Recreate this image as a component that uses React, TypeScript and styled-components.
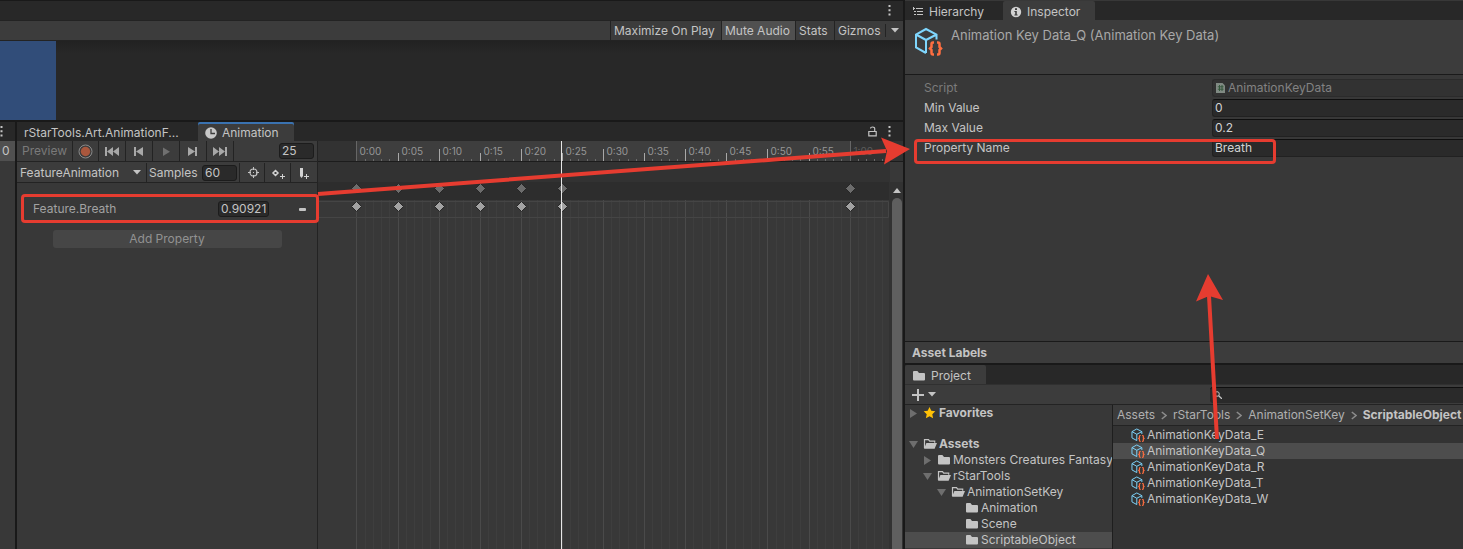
import React from "react";
import styled, { createGlobalStyle, css } from "styled-components";

const Global = createGlobalStyle`
  * { box-sizing: border-box; }
  html, body { margin: 0; background: #191919; }
  body, button, input, select { font-family: Inter, "Liberation Sans", sans-serif; font-size: 12px; line-height: 16px; color: #c4c4c4; }
  button, input, select { margin: 0; padding: 0; border: 0; background: none; outline: none; border-radius: 0; }
  svg { display: block; flex: none; }
`;

/* ---------- shell ---------- */

const Editor = styled.main`
  position: relative;
  display: grid;
  grid-template-columns: minmax(0, 903fr) minmax(0, 558fr);
  gap: 2px;
  min-height: 100vh;
  overflow: hidden;
  white-space: nowrap;
`;

const Column = styled.div`
  display: flex;
  flex-direction: column;
  gap: 2px;
  min-width: 0;
`;

const TabBar = styled.div`
  display: flex;
  align-items: stretch;
  height: 19px;
  background: #282828;
`;

const Tab = styled.button<{ $active?: boolean; $accent?: boolean; $width?: number }>`
  display: flex;
  align-items: center;
  gap: 5px;
  padding: 2px 7px 0;
  ${(p) => p.$width && css`width: ${p.$width}px;`}
  border-radius: 2px 2px 0 0;
  background: ${(p) => (p.$active ? "#3c3c3c" : "transparent")};
  box-shadow: ${(p) => (p.$accent ? "inset 0 2px #3a72b0" : "none")};
`;

const TabActions = styled.div`
  display: flex;
  align-items: center;
  gap: 11px;
  margin-left: auto;
  padding-right: 12px;
`;

const IconButton = styled.button`
  display: flex;
  align-items: center;
  justify-content: center;
`;

/* ---------- game view ---------- */

const GamePanel = styled.section`
  display: flex;
  flex-direction: column;
  height: 120px;
  padding-top: 1px;
`;

const GameToolbar = styled.div`
  display: flex;
  justify-content: flex-end;
  gap: 1px;
  height: 21px;
  border-top: 1px solid #232323;
  border-bottom: 1px solid #232323;
  background: #3c3c3c;
`;

const ToolbarButton = styled.button<{ $on?: boolean; $width: number }>`
  width: ${(p) => p.$width}px;
  padding-left: 3px;
  background: ${(p) => (p.$on ? "#505050" : "#3c3c3c")};
  box-shadow: -1px 0 #232323;
  text-align: left;
`;

const DropButton = styled(IconButton)`
  width: 18px;
  margin: 3px 0;
  border-left: 1px solid #232323;
`;

const GameSurface = styled.div`
  flex: 1;
  background: linear-gradient(#222 0, #282828 12px);
`;

const Sky = styled.div`
  width: 56px;
  height: 100%;
  background: #314d79;
`;

/* ---------- animation window ---------- */

const LowerArea = styled.div`
  display: grid;
  grid-template-columns: 15px minmax(0, 1fr);
  gap: 2px;
  flex: 1;
`;

const Sliver = styled.aside`
  display: flex;
  flex-direction: column;
  background: #383838;
  overflow: hidden;
`;

const SliverHead = styled.div`
  display: flex;
  align-items: center;
  height: 19px;
  background: #282828;
`;

const SliverValue = styled.div`
  height: 20px;
  padding: 2px;
  background: #505050;
`;

const AnimationPanel = styled.section`
  display: flex;
  flex-direction: column;
`;

const AnimationBody = styled.div`
  display: grid;
  grid-template-columns: 301px minmax(0, 1fr) 14px;
  flex: 1;
`;

const Properties = styled.div`
  border-right: 1px solid #232323;
  background: #383838;
`;

const ControlRow = styled.div<{ $inset?: boolean }>`
  display: flex;
  align-items: stretch;
  height: 21px;
  padding-top: ${(p) => (p.$inset ? 1 : 0)}px;
  border-bottom: 1px solid #232323;
  background: #3c3c3c;
`;

const Control = styled.button<{ $width: number; $dim?: boolean }>`
  display: flex;
  align-items: center;
  justify-content: center;
  width: ${(p) => p.$width}px;
  border-right: 1px solid #232323;
  color: ${(p) => (p.$dim ? "#7a7a7a" : "#c4c4c4")};

  &:last-child {
    border-right: 0;
  }
`;

const NumberBox = styled.input<{ $width: number }>`
  width: ${(p) => p.$width}px;
  height: 16px;
  padding: 0 2px;
  border: 1px solid #1c1c1c;
  border-radius: 3px;
  background: #2a2a2a;
`;

const FrameBox = styled(NumberBox)`
  margin: 2px 3px 0 auto;
`;

const ClipSelect = styled.div`
  position: relative;
  display: flex;
  width: 130px;
  border-right: 1px solid #232323;
`;

const Select = styled.select`
  appearance: none;
  width: 100%;
  padding-left: 3px;
`;

const SelectArrow = styled.span`
  position: absolute;
  right: 5px;
  top: 7px;
  pointer-events: none;
`;

const Samples = styled.label`
  display: flex;
  align-items: center;
  justify-content: space-between;
  width: 93px;
  padding: 0 2px;
  border-right: 1px solid #232323;
`;

const PropertyRow = styled.label`
  display: flex;
  align-items: center;
  height: 18px;
  margin-top: 17px;
  padding: 0 10px 0 16px;
  color: #a2a2a2;
`;

const ValueBox = styled(NumberBox)`
  margin-left: auto;
  margin-right: 29px;
`;

const AddProperty = styled.button`
  display: block;
  width: 229px;
  height: 18px;
  margin: 12px auto 0;
  border-radius: 3px;
  background: #464646;
  color: #929292;
`;

const Timeline = styled.div`
  display: flex;
  flex-direction: column;
  min-width: 0;
  background: #383838;
`;

const TimelineArt = styled.svg`
  width: 100%;
  flex: 1;
`;

const ScrollGutter = styled.div`
  display: flex;
  flex-direction: column;
  align-items: center;
  padding-left: 1px;
  background: #323232;
`;

const GutterHead = styled.div`
  width: 100%;
  height: 41px;
  background: linear-gradient(#323232 20px, #1c1c1c 20px, #1c1c1c 21px, #383838 21px);
`;

const ScrollUp = styled(IconButton)`
  height: 16px;
`;

const Thumb = styled.div`
  flex: 1;
  width: 10px;
  border-radius: 5px 5px 0 0;
  background: #5f5f5f;
`;

/* ---------- inspector ---------- */

const Inspector = styled.section`
  display: flex;
  flex-direction: column;
  flex: 1;
  padding-top: 1px;
  background: #383838;
`;

const ObjectHeader = styled.header`
  display: flex;
  gap: 8px;
  height: 55px;
  padding: 7px 9px;
  border-bottom: 1px solid #1a1a1a;
  background: #3c3c3c;
  color: #a8a8a8;
`;

const ObjectTitle = styled.h1`
  margin: 0;
  font-size: 13px;
  font-weight: 400;
  line-height: 16px;
`;

const Fields = styled.div`
  flex: 1;
  padding: 3px 0 0 19px;
`;

const Field = styled.label<{ $dim?: boolean }>`
  display: grid;
  grid-template-columns: 288px minmax(0, 1fr);
  align-items: center;
  height: 20px;
  color: ${(p) => (p.$dim ? "#7b7b7b" : "#c4c4c4")};
`;

const FieldBox = styled.span<{ $dim?: boolean }>`
  display: flex;
  align-items: center;
  gap: 2px;
  height: 18px;
  padding-left: 2px;
  border: 1px solid ${(p) => (p.$dim ? "#2b2b2b" : "#212121")};
  border-top-color: ${(p) => (p.$dim ? "#2b2b2b" : "#0f0f0f")};
  border-right: 0;
  border-radius: 3px 0 0 3px;
  background: ${(p) => (p.$dim ? "#323232" : "#2a2a2a")};
`;

const FieldInput = styled.input<{ $dim?: boolean }>`
  flex: 1;
  min-width: 0;
  color: ${(p) => (p.$dim ? "#828282" : "#d2d2d2")};
`;

const LabelsBar = styled.h2`
  margin: 0;
  height: 22px;
  padding: 2px 7px;
  border-top: 1px solid #1a1a1a;
  background: #3c3c3c;
  font-size: 12px;
  font-weight: 700;
  line-height: 18px;
`;

/* ---------- project ---------- */

const Project = styled.section`
  display: flex;
  flex-direction: column;
`;

const ProjectToolbar = styled.div`
  display: flex;
  align-items: center;
  justify-content: space-between;
  height: 21px;
  padding-left: 7px;
  border-top: 1px solid #303030;
  border-bottom: 1px solid #232323;
  background: #3c3c3c;
`;

const AddButton = styled(IconButton)`
  gap: 4px;
`;

const Search = styled.label`
  display: flex;
  align-items: center;
  width: 253px;
  height: 16px;
  padding-left: 4px;
  border-top: 1px solid #0f0f0f;
  border-radius: 3px 0 0 3px;
  background: #2a2a2a;
`;

const SearchInput = styled.input`
  flex: 1;
  min-width: 0;
`;

const ProjectBody = styled.div`
  display: grid;
  grid-template-columns: 208px minmax(0, 1fr);
`;

const Tree = styled.div`
  display: flex;
  flex-direction: column;
  padding-bottom: 1px;
  border-right: 1px solid #1e1e1e;
  background: #383838;
  overflow: hidden;
`;

const TreeGap = styled.div`
  height: 15px;
`;

const TreeRow = styled.button<{ $depth: number; $bold?: boolean; $selected?: boolean }>`
  display: flex;
  align-items: center;
  height: 16px;
  padding-left: ${(p) => 4 + p.$depth * 14}px;
  background: ${(p) => (p.$selected ? "#4d4d4d" : "transparent")};
  font-weight: ${(p) => (p.$bold ? 700 : 400)};
`;

const TreeSlot = styled.span`
  flex: none;
  width: 14px;
`;

const TreeText = styled.span`
  margin-left: 2px;
`;

const Assets = styled.div`
  background: #333;
`;

const Crumbs = styled.nav`
  display: flex;
  align-items: center;
  gap: 6px;
  height: 21px;
  margin-bottom: 1px;
  padding-left: 4px;
  border-bottom: 1px solid #232323;
  background: #3c3c3c;
`;

const Crumb = styled.a<{ $current?: boolean }>`
  color: ${(p) => (p.$current ? "#c4c4c4" : "#b0b0b0")};
  font-weight: ${(p) => (p.$current ? 700 : 400)};
  text-decoration: none;
`;

const AssetRow = styled.button<{ $selected?: boolean }>`
  display: flex;
  align-items: center;
  gap: 2px;
  width: 100%;
  height: 16px;
  padding-left: 18px;
  background: ${(p) => (p.$selected ? "#4d4d4d" : "transparent")};
`;

/* ---------- annotations ---------- */

const Callout = styled.div<{ $x: number; $y: number; $w: number; $h: number }>`
  position: absolute;
  left: ${(p) => p.$x}px;
  top: ${(p) => p.$y}px;
  width: ${(p) => p.$w}px;
  height: ${(p) => p.$h}px;
  border: 3px solid #e63c30;
  border-radius: 4px;
  pointer-events: none;
`;

const Arrows = styled.svg`
  position: absolute;
  inset: 0;
  width: 100%;
  height: 100%;
  pointer-events: none;
`;

/* ---------- icons ---------- */

const Kebab = () => (
  <svg width="3" height="11" fill="#c4c4c4">
    <path d="M0.5 0h2v2h-2zM0.5 4.3h2v2h-2zM0.5 8.6h2v2h-2z" />
  </svg>
);

const Down = () => (
  <svg width="8" height="5" fill="#c4c4c4"><path d="M0 0h8L4 4.6z" /></svg>
);

const HierarchyIcon = () => (
  <svg width="12" height="12" stroke="#c4c4c4" fill="none">
    <path d="M1 2.5h2M4 2.5h7M2 5.500h2M5 5.500h6M2 8.500h2M5 8.500h6M1.500 1v3" />
  </svg>
);

const InfoIcon = () => (
  <svg width="12" height="12">
    <circle cx="6" cy="6" r="5.2" fill="#d2d2d2" />
    <path d="M5 2.3h2v1.6H5zM4.4 5h2.4v3.4h.8v1H4.4v-1h.8V6h-.8z" fill="#3c3c3c" />
  </svg>
);

const ClockIcon = () => (
  <svg width="12" height="12">
    <circle cx="6" cy="6" r="5.8" fill="#c8c8c8" />
    <path d="M6 2v4.5h4" stroke="#3c3c3c" strokeWidth="1.3" fill="none" />
  </svg>
);

const LockIcon = () => (
  <svg width="9" height="11" fill="none" stroke="#c4c4c4">
    <path d="M0.8 5.5h7.4v4.3H0.8zM6.7 5.5V2.6Q6.7 1 4.6 1T2.6 2.5" strokeWidth="1.2" />
  </svg>
);

const FolderIcon = ({ open }: { open?: boolean }) =>
  open ? (
    <svg width="14" height="12">
      <path d="M1.500 10V1.600h4l1.200 1.600h5v1.600" fill="none" stroke="#c4c4c4" strokeWidth="1.200" />
      <path d="M3.400 5h10.600L11.600 10.800H1z" fill="#c4c4c4" />
    </svg>
  ) : (
    <svg width="14" height="12"><path d="M1 2q0-1 1-1h3.4L7 3h5q1 0 1 1v5.6q0 1-1 1H2q-1 0-1-1z" fill="#c4c4c4" /></svg>
  );

const StarIcon = () => (
  <svg width="14" height="12" viewBox="1 1 14 12"><path d="M7.500 1l1.800 3.800 4 .5-3 2.900.8 4.100-3.600-2-3.600 2 .8-4.100-3-2.900 4-.5z" fill="#ffc107" /></svg>
);

const CubeIcon = ({ size }: { size: number }) => (
  <svg width={size} height={size} viewBox="0 0 29 29" fill="none">
    <path d="M12 26L2 20.500V7.500L12 2 22.500 7.500V12.500M2 7.500L12 13 22.500 7.500M12 13V26" stroke="#7fd6fd" strokeWidth="2" />
    <path d="M20 15.500h-1q-1.500 0-1.500 1.500v3l-1.500 1.500 1.500 1.500v3q0 1.500 1.500 1.500h1M23 15.500h1q1.500 0 1.500 1.500v3l1.500 1.500-1.500 1.500v3q0 1.500-1.500 1.500h-1" stroke="#ff6e40" strokeWidth="2.500" />
  </svg>
);

const ScriptIcon = () => (
  <svg width="11" height="12">
    <path d="M1 1h6.5L10 3.4V11H1z" fill="#808a83" />
    <path d="M4.5 3v6M7 3v6M2.8 4.8h5.7M2.8 7.2h5.7" stroke="#35573c" />
  </svg>
);

const Fold = ({ open }: { open?: boolean }) => (
  <svg width="9" height="9" fill="#6e6e6e"><path d={open ? "M0 1h9L4.5 8z" : "M1 0l7 4.5L1 9z"} /></svg>
);

const Chevron = () => (
  <svg width="6" height="9" fill="none" stroke="#8c8c8c" strokeWidth="1.5"><path d="M0.8 1L5 4.5 0.8 8" /></svg>
);

const PlayIcon = ({ kind }: { kind: string }) => {
  const shapes: Record<string, string> = {
    first: "M0 0h2v9H0zM8 0v9L2 4.5zM14 0v9L8 4.5z",
    prev: "M2 0h2v9H2zM11 0v9L4 4.5z",
    play: "M4 0.5l7 4.2-7 4.2z",
    next: "M2 0v9l7-4.5zM9 0h2v9H9z",
    last: "M0 0v9l6-4.5zM6 0v9l6-4.5zM12 0h2v9h-2z",
  };
  return <svg width="14" height="9" fill={kind === "play" ? "#707070" : "#a8a8a8"}><path d={shapes[kind]} /></svg>;
};

/* ---------- timeline drawing ---------- */

const ORIGIN = 38.9;
const FRAME = 8.22;
const frameX = (f: number) => Math.floor(ORIGIN + f * FRAME) + 0.5;
const KEYS = [0, 5, 10, 15, 20, 25, 60];
const FRAMES = Array.from({ length: 65 }, (_, i) => i);

const Diamond = ({ x, y, fill }: { x: number; y: number; fill: string }) => (
  <path d={`M${x} ${y - 5}l5 5-5 5-5-5z`} fill={fill} stroke="#262626" />
);

const TimelineDrawing = () => (
  <TimelineArt fontSize="10" fill="#969696">
    <rect width="100%" height="100%" fill="#383838" />
    {FRAMES.map((f) => (
      <path key={f} d={`M${frameX(f)} 59V2000`} stroke={f % 5 ? "#3e3e3e" : "#4a4a4a"} />
    ))}
    <rect width="100%" height="20" fill="#323232" />
    <rect x="38" width="494" height="20" fill="#3e3e3e" />
    <rect y="20" width="100%" height="1" fill="#1c1c1c" />
    <rect y="21" width="100%" height="20" fill="#323232" />
    <rect y="41" width="100%" height="18" fill="#2d2d2d" />
    <path d="M0 60.5H570.5V76.5H0" fill="none" stroke="#454545" />
    {FRAMES.map((f) => (
      <path
        key={f}
        d={`M${frameX(f)} ${f % 60 === 0 ? 0 : f % 10 === 0 ? 8 : f % 5 === 0 ? 12 : 18}V20`}
        stroke={f % 60 === 0 ? "#666" : f % 5 ? "#6a6a6a" : "#a8a8a8"}
      />
    ))}
    {FRAMES.filter((f) => f % 5 === 0 && f <= 60).map((f) => (
      <text key={f} x={frameX(f) + 3} y="14" fill={f === 60 ? "#5c5c5c" : "#969696"}>
        {f === 60 ? "1:00" : `0:${String(f).padStart(2, "0")}`}
      </text>
    ))}
    {KEYS.map((f) => (
      <g key={f}>
        <Diamond x={frameX(f)} y={47.5} fill="#6c6c6c" />
        <Diamond x={frameX(f)} y={65.5} fill="#a2a2a2" />
      </g>
    ))}
    <path d="M243.5 0V2000" stroke="#e6e6e6" />
  </TimelineArt>
);

/* ---------- data ---------- */

const TREE = [
  { name: "Assets", depth: 0, fold: "open", bold: true },
  { name: "Monsters Creatures Fantasy", depth: 1, fold: "shut" },
  { name: "rStarTools", depth: 1, fold: "open" },
  { name: "AnimationSetKey", depth: 2, fold: "open" },
  { name: "Animation", depth: 3 },
  { name: "Scene", depth: 3 },
  { name: "ScriptableObject", depth: 3, selected: true },
];

const CRUMBS = ["Assets", "rStarTools", "AnimationSetKey", "ScriptableObject"];
const ASSETS = ["E", "Q", "R", "T", "W"];
const FIELDS = [
  ["Min Value", "0"],
  ["Max Value", "0.2"],
  ["Property Name", "Breath"],
];

export default function App() {
  return (
    <>
      <Global />
      <Editor>
        <Column>
          <GamePanel>
            <TabBar>
              <TabActions><IconButton aria-label="Game view menu"><Kebab /></IconButton></TabActions>
            </TabBar>
            <GameToolbar>
              <ToolbarButton $width={110}>Maximize On Play</ToolbarButton>
              <ToolbarButton $width={73} $on>Mute Audio</ToolbarButton>
              <ToolbarButton $width={38}>Stats</ToolbarButton>
              <ToolbarButton $width={49}>Gizmos</ToolbarButton>
              <DropButton aria-label="Gizmo options"><Down /></DropButton>
            </GameToolbar>
            <GameSurface><Sky /></GameSurface>
          </GamePanel>

          <LowerArea>
            <Sliver>
              <SliverHead><Kebab /></SliverHead>
              <SliverValue>0</SliverValue>
            </Sliver>
            <AnimationPanel>
              <TabBar>
                <Tab $width={181}>rStarTools.Art.AnimationF...</Tab>
                <Tab $active $accent $width={96}><ClockIcon />Animation</Tab>
                <TabActions>
                  <IconButton aria-label="Lock"><LockIcon /></IconButton>
                  <IconButton aria-label="Animation menu"><Kebab /></IconButton>
                </TabActions>
              </TabBar>
              <AnimationBody>
                <Properties>
                  <ControlRow>
                    <Control $width={56} $dim>Preview</Control>
                    <Control $width={26} aria-label="Record">
                      <svg width="15" height="15"><circle cx="7.5" cy="7.5" r="6.5" fill="none" stroke="#8a8a8a" /><circle cx="7.5" cy="7.5" r="4.7" fill="#a9573d" /></svg>
                    </Control>
                    {["first", "prev", "play", "next", "last"].map((k) => (
                      <Control key={k} $width={27} aria-label={k}><PlayIcon kind={k} /></Control>
                    ))}
                    <FrameBox $width={35} aria-label="Frame" defaultValue="25" />
                  </ControlRow>
                  <ControlRow $inset>
                    <ClipSelect>
                      <Select aria-label="Clip"><option>FeatureAnimation</option></Select>
                      <SelectArrow><Down /></SelectArrow>
                    </ClipSelect>
                    <Samples>Samples<NumberBox $width={35} defaultValue="60" /></Samples>
                    <Control $width={25} aria-label="Filter by selection">
                      <svg width="13" height="13" fill="none" stroke="#c4c4c4"><circle cx="7.500" cy="6.500" r="3.500" strokeWidth="1.200" /><path d="M7.500 1v3M7.500 9v3M2 6.500h3M10 6.500h3M7 6.500h1" /></svg>
                    </Control>
                    <Control $width={26} aria-label="Add keyframe">
                      <svg width="14" height="12" fill="none" stroke="#d2d2d2"><path d="M4.500 3.500L7 6 4.500 8.500 2 6z" strokeWidth="1.500" /><path d="M9 9.500h5M11.500 7v5" /></svg>
                    </Control>
                    <Control $width={26} aria-label="Add event">
                      <svg width="12" height="12" fill="#d2d2d2"><path d="M2 1h3v8L3.500 11 2 9zM6 9h5v1H6zM8 7h1v5H8z" /></svg>
                    </Control>
                  </ControlRow>
                  <PropertyRow>
                    Feature.Breath
                    <ValueBox $width={51} defaultValue="0.90921" />
                    <svg width="9" height="5"><rect x="1" y="1" width="7" height="3" rx="1" fill="#c4c4c4" /></svg>
                  </PropertyRow>
                  <AddProperty>Add Property</AddProperty>
                </Properties>
                <Timeline><TimelineDrawing /></Timeline>
                <ScrollGutter>
                  <GutterHead />
                  <ScrollUp aria-label="Scroll up"><svg width="8" height="5" fill="#c4c4c4"><path d="M4 0l4 5H0z" /></svg></ScrollUp>
                  <Thumb />
                </ScrollGutter>
              </AnimationBody>
            </AnimationPanel>
          </LowerArea>
        </Column>

        <Column>
          <Inspector>
            <TabBar>
              <Tab $width={98}><HierarchyIcon />Hierarchy</Tab>
              <Tab $active $width={92}><InfoIcon />Inspector</Tab>
            </TabBar>
            <ObjectHeader>
              <CubeIcon size={29} />
              <ObjectTitle>Animation Key Data_Q (Animation Key Data)</ObjectTitle>
            </ObjectHeader>
            <Fields>
              <Field $dim>
                Script
                <FieldBox $dim><ScriptIcon /><FieldInput $dim readOnly value="AnimationKeyData" /></FieldBox>
              </Field>
              {FIELDS.map(([name, value]) => (
                <Field key={name}>
                  {name}
                  <FieldBox><FieldInput defaultValue={value} /></FieldBox>
                </Field>
              ))}
            </Fields>
            <LabelsBar>Asset Labels</LabelsBar>
          </Inspector>

          <Project>
            <TabBar>
              <Tab $active $width={81}><FolderIcon />Project</Tab>
            </TabBar>
            <ProjectToolbar>
              <AddButton aria-label="Create">
                <svg width="12" height="12" stroke="#c4c4c4" strokeWidth="2"><path d="M0 6h12M6 0v12" /></svg>
                <Down />
              </AddButton>
              <Search>
                <svg width="8" height="8" fill="none" stroke="#c4c4c4"><circle cx="3" cy="3" r="2.300" /><path d="M4.700 4.700L8 8" strokeWidth="1.300" /></svg>
                <SearchInput aria-label="Search" />
              </Search>
            </ProjectToolbar>
            <ProjectBody>
              <Tree>
                <TreeRow $depth={0} $bold>
                  <TreeSlot><Fold /></TreeSlot><StarIcon /><TreeText>Favorites</TreeText>
                </TreeRow>
                <TreeGap />
                {TREE.map((t) => (
                  <TreeRow key={t.name} $depth={t.depth} $bold={t.bold} $selected={t.selected}>
                    <TreeSlot>{t.fold && <Fold open={t.fold === "open"} />}</TreeSlot>
                    <FolderIcon open={t.fold === "open"} />
                    <TreeText>{t.name}</TreeText>
                  </TreeRow>
                ))}
              </Tree>
              <Assets>
                <Crumbs aria-label="Folder path">
                  {CRUMBS.map((c, i) => (
                    <React.Fragment key={c}>
                      {i > 0 && <Chevron />}
                      <Crumb href="#" $current={i === CRUMBS.length - 1}>{c}</Crumb>
                    </React.Fragment>
                  ))}
                </Crumbs>
                {ASSETS.map((a) => (
                  <AssetRow key={a} $selected={a === "Q"}><CubeIcon size={14} />AnimationKeyData_{a}</AssetRow>
                ))}
              </Assets>
            </ProjectBody>
          </Project>
        </Column>

        <Callout $x={21} $y={194} $w={298} $h={29} />
        <Callout $x={914} $y={139} $w={362} $h={25} />
        <Arrows fill="#e63c30" stroke="#e63c30">
          <path d="M318 194L886 151M1217 439L1209 296" strokeWidth="4" fill="none" />
          <path d="M910 149L881 137.500L887 151L884 164.500zM1208 274L1196 301.500L1209 296L1223 300z" stroke="none" />
        </Arrows>
      </Editor>
    </>
  );
}
